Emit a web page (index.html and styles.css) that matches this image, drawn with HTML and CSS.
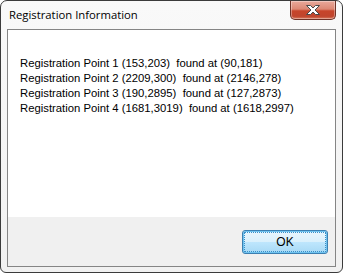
FILE: index.html
```html
<!DOCTYPE html>
<html lang="en">

<head>
    <meta charset="UTF-8">
    <meta name="viewport" content="width=device-width, initial-scale=1.0">
    <title>Registration Information</title>
    <link rel="stylesheet" href="styles.css">
</head>

<body>
    <div class="window">
        <!-- Barra de título -->
        <div class="titlebar">
            <span class="title">Registration Information</span>
            <button class="close-button" title="Close">
                <svg width="20" height="12" viewBox="0 0 20 12">
                    <path d="M3.5 1.5 L7.5 1.5 L10 4 L12.5 1.5 L16.5 1.5 L12 6 L16.5 10.5 L12.5 10.5 L10 8 L7.5 10.5 L3.5 10.5 L8 6 Z"
                        fill="#ffffff" stroke="#4a4a4a" stroke-width="1" stroke-linejoin="round" />
                </svg>
            </button>
        </div>

        <div class="client">
            <div class="content">
                <p>Registration Point 1 (153,203)&nbsp; found at (90,181)</p>
                <p>Registration Point 2 (2209,300)&nbsp; found at (2146,278)</p>
                <p>Registration Point 3 (190,2895)&nbsp; found at (127,2873)</p>
                <p>Registration Point 4 (1681,3019)&nbsp; found at (1618,2997)</p>
            </div>
            <div class="footer">
                <button class="ok-button"><span>OK</span></button>
            </div>
        </div>
    </div>
</body>

</html>
```

FILE: styles.css
```css
body {
    margin: 0;
    background-color: #ffffff;
    font-family: "Liberation Sans", Arial, sans-serif;
}

.window {
    width: 343px;
    height: 273px;
    box-sizing: border-box;
    border: 1px solid #3b3b3b;
    border-radius: 7px 7px 6px 6px;
    background: linear-gradient(#f9f9f9, #f1f1f1);
    padding: 0 6px 5px 6px;
    display: flex;
    flex-direction: column;
}

.titlebar {
    height: 28px;
    display: flex;
    justify-content: space-between;
    align-items: flex-start;
}

.title {
    padding: 6px 0 0 2px;
    font-family: "Open Sans", sans-serif;
    font-size: 11.3px;
    color: #000;
}

.close-button {
    width: 46px;
    height: 19px;
    padding: 0;
    border: 1px solid #6e3328;
    border-top: none;
    border-radius: 0 0 5px 5px;
    background: linear-gradient(#e9a99b 0%, #dc8874 45%, #c7452b 55%, #c0452d 85%, #d87a5f 100%);
    box-shadow: inset 0 0 0 1px rgba(255, 255, 255, 0.35);
    display: flex;
    align-items: center;
    justify-content: center;
}

.client {
    flex: 1;
    border: 1px solid #858585;
    display: flex;
    flex-direction: column;
}

.content {
    flex: 1;
    background-color: #ffffff;
    padding: 26px 0 0 12px;
    font-size: 11.3px;
    color: #000;
}

.content p {
    margin: 0;
    line-height: 15px;
}

.footer {
    height: 49px;
    background-color: #f0f0f0;
    display: flex;
    justify-content: flex-end;
    align-items: flex-start;
}

.ok-button {
    width: 86px;
    height: 24px;
    margin: 13px 7px 0 0;
    padding: 1px;
    border: 1px solid #3c7fb1;
    border-radius: 3px;
    background: linear-gradient(#eaf6fd 0%, #d9f0fc 50%, #bee6fd 51%, #a7d9f5 100%);
    box-shadow: inset 0 0 0 1px #6fc3ef;
    font-family: "Liberation Sans", Arial, sans-serif;
    font-size: 12px;
    color: #000;
}

.ok-button span {
    display: flex;
    align-items: center;
    justify-content: center;
    height: 100%;
    border: 1px dotted #3a8fc8;
    box-sizing: border-box;
}
```
